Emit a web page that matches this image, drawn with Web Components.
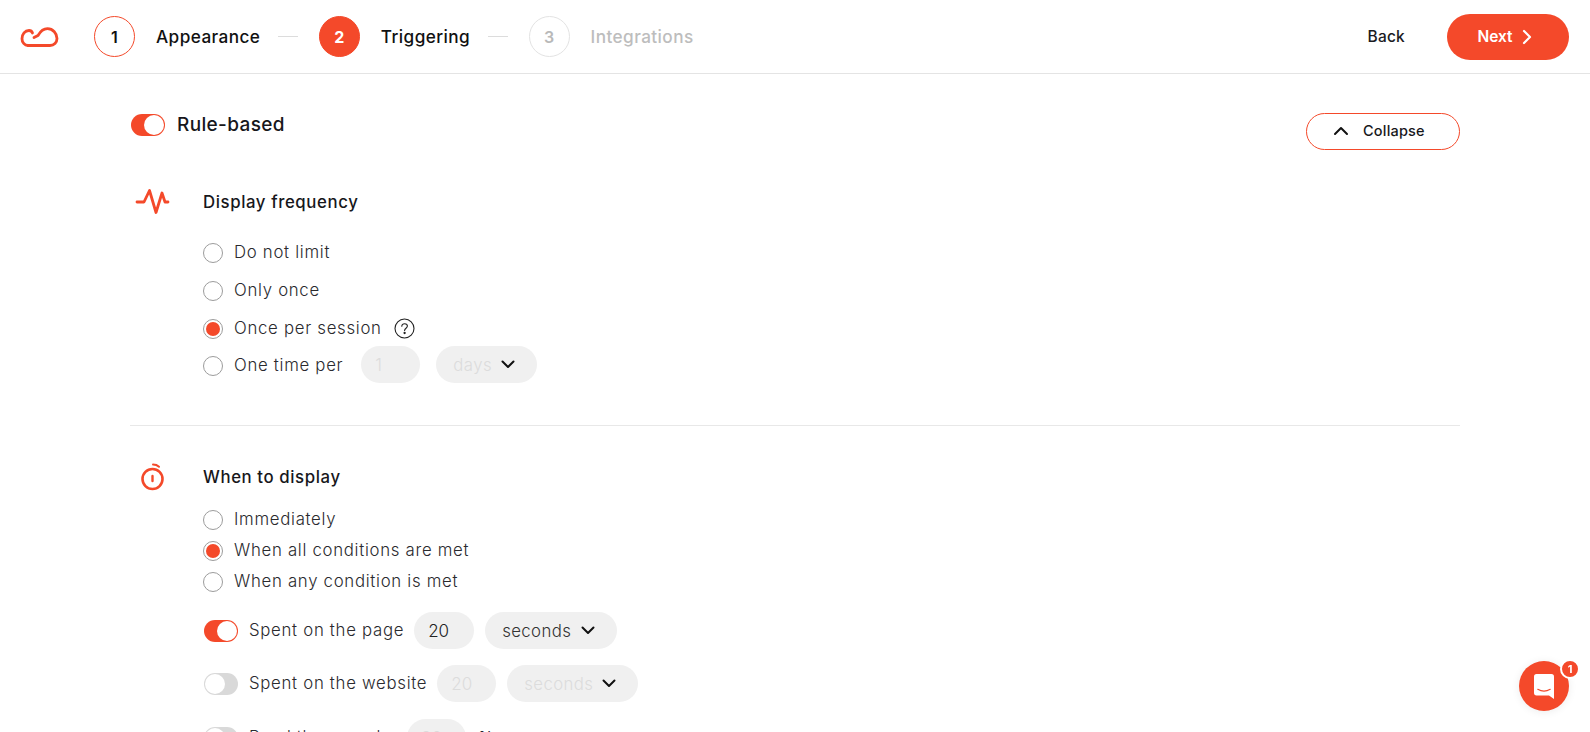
<!DOCTYPE html>
<html><head><meta charset="utf-8">
<style>
html,body{margin:0;padding:0;height:732px;overflow:hidden;background:#fff;font-family:Inter,"Open Sans",sans-serif;color:#1b1b1f}
</style></head><body>
<app-header></app-header>
<main-panel>
  <rule-head></rule-head>
  <rule-section kind="pulse" heading="Display frequency" gap="20">
    <div style="display:flex;flex-direction:column">
      <radio-row style="height:38px" label="Do not limit"></radio-row>
      <radio-row style="height:38px" label="Only once"></radio-row>
      <radio-row style="height:37px" label="Once per session" checked help></radio-row>
      <radio-row style="height:38px" label="One time per"><num-field off value="1" w="59"></num-field><unit-select off value="days" w="101"></unit-select></radio-row>
    </div>
  </rule-section>
  <hr-line></hr-line>
  <rule-section kind="timer" heading="When to display" gap="15">
    <div style="display:flex;flex-direction:column">
      <radio-row style="height:31px" label="Immediately"></radio-row>
      <radio-row style="height:31px" label="When all conditions are met" checked></radio-row>
      <radio-row style="height:31px" label="When any condition is met"></radio-row>
      <toggle-row style="margin-top:15px" on label="Spent on the page"><num-field value="20" w="60"></num-field><unit-select value="seconds" w="132"></unit-select></toggle-row>
      <toggle-row style="margin-top:16px" label="Spent on the website"><num-field off value="20" w="59"></num-field><unit-select off value="seconds" w="131"></unit-select></toggle-row>
      <toggle-row style="margin-top:17px" label="Read the page by"><num-field off value="20" w="59"></num-field><span style="font-size:15.5px;margin-left:1px">%</span></toggle-row>
    </div>
  </rule-section>
</main-panel>
<chat-bubble></chat-bubble>
<script>
const ACC='#f4492a';
function def(name,html){customElements.define(name,class extends HTMLElement{connectedCallback(){if(this.shadowRoot)return;const r=this.attachShadow({mode:'open'});r.innerHTML=typeof html==='function'?html(this):html;}})}
def('step-item',e=>{const s=e.getAttribute('state');
 const c=s==='active'?`background:${ACC};border-color:${ACC};color:#fff;font-weight:700`:s==='done'?`border-color:${ACC};color:#111;font-weight:600`:`border-color:#e3e3e3;color:#b9b9b9;font-weight:600`;
 const t=s==='off'?'#bdbdbd':'#111';
 return `<style>:host{display:flex;align-items:center}
 .c{width:41px;height:41px;border:1.6px solid;border-radius:50%;display:flex;align-items:center;justify-content:center;font-size:16px;box-sizing:border-box;flex:none;${c}}
 .t{margin-left:21px;font-size:17.2px;font-weight:500;color:${t};letter-spacing:.42px;white-space:nowrap}</style>
 <div class="c">${e.getAttribute('n')}</div><div class="t">${e.getAttribute('label')}</div>`});
def('app-header',`<style>:host{display:flex;align-items:center;height:73px;border-bottom:1px solid #e4e4e4;padding:0 21px 0 20px}
 .dash{width:20px;height:1px;background:#dcdcdc;margin:0 20.500px 0 18px;flex:none}
 .steps{display:flex;align-items:center;margin-left:35px;flex:1}
 .back{font-size:15.5px;font-weight:500;color:#1b1b1f;margin-right:42px;letter-spacing:.2px}
 .next{width:122px;height:46px;box-sizing:border-box;padding-right:7px;border-radius:23px;background:${ACC};color:#fff;font-size:15.5px;font-weight:600;display:flex;align-items:center;justify-content:center;gap:9px}
 svg{display:block}</style>
 <svg width="39" height="23" viewBox="0 0 39 23" fill="none" stroke="${ACC}" stroke-width="2.8" stroke-linecap="round" stroke-linejoin="round"><path d="M8 20.500h22c4 0 7-3.200 7-7 0-5-4-9.800-9.500-9.800-4 0-7 2.500-9.500 6.800l-4 2"/><path d="M8 20.500C4.500 20.500 2 17.300 2 13.700 2 9 5 5.500 9 5.500c2 0 3 1 3.500 2.500"/></svg>
 <div class="steps"><step-item state="done" n="1" label="Appearance"></step-item><div class="dash"></div><step-item state="active" n="2" label="Triggering"></step-item><div class="dash"></div><step-item state="off" n="3" label="Integrations"></step-item></div>
 <div class="back">Back</div>
 <div class="next"><span>Next</span><svg width="10" height="16" viewBox="0 0 10 16" fill="none" stroke="#fff" stroke-width="2.200" stroke-linecap="round" stroke-linejoin="round"><path d="M2 2l6 6-6 6"/></svg></div>`);
def('main-panel',`<style>:host{display:block;margin:0 130px;padding-top:39px}</style><slot></slot>`);
def('tog-switch',e=>{const on=e.hasAttribute('on');
 return `<style>:host{display:block;width:34px;height:22px;flex:none;position:relative;border-radius:11px;background:${on?ACC:'#d9d9d9'}}
 i{position:absolute;top:1px;${on?'right:1px':'left:1px'};width:20px;height:20px;border-radius:50%;background:#fff}</style><i></i>`});
def('rule-head',`<style>:host{display:flex;justify-content:space-between;align-items:flex-start;padding-left:1px;margin-bottom:40px}
 .l{display:flex;align-items:center;gap:12px;font-size:19px;font-weight:500;letter-spacing:.35px;color:#17171b;height:22px;margin-top:1px}
 .l span{margin-top:-2px}
 .b{width:154px;height:37px;box-sizing:border-box;border:1.6px solid ${ACC};border-radius:19px;display:flex;align-items:center;justify-content:flex-start;gap:14px;font-size:14.500px;font-weight:500;color:#17171b;letter-spacing:.2px;padding:0 0 2px 26px}
 svg{display:block}</style>
 <div class="l"><tog-switch on></tog-switch><span>Rule-based</span></div>
 <div class="b"><svg width="16" height="10" viewBox="0 0 16 10" fill="none" stroke="#111" stroke-width="2" stroke-linecap="round" stroke-linejoin="round"><path d="M2 8l6-6 6 6"/></svg><span>Collapse</span></div>`);
const ICONS={
 pulse:`<svg width="35" height="27" viewBox="0 0 35 27" fill="none" stroke="${ACC}" stroke-width="2.800" stroke-linecap="round" stroke-linejoin="round"><path d="M2 14h7l5.500-11.500 6.500 22 6-19.500 3 9h3"/></svg>`,
 timer:`<svg width="24" height="28" viewBox="0 0 24 28" fill="none" stroke="${ACC}" stroke-linecap="round"><circle cx="11.500" cy="16" r="10" stroke-width="2.600"/><path d="M11.500 13v5" stroke-width="2.400"/><path d="M12 1.500c2.500 0 4.500.8 6 2.200" stroke-width="2"/></svg>`};
def('rule-section',e=>`<style>:host{display:block;position:relative;padding-left:73px}
 .ico{position:absolute;left:${e.getAttribute('kind')==='pulse'?5:11}px;top:-2px}
 .h{font-size:16.800px;font-weight:500;height:24px;line-height:24px;letter-spacing:.6px;color:#17171b;margin-bottom:${e.getAttribute('gap')}px}
 svg{display:block}</style>
 <div class="ico">${ICONS[e.getAttribute('kind')]}</div><div class="h">${e.getAttribute('heading')}</div><slot></slot>`);
def('radio-row',e=>{const c=e.hasAttribute('checked');
 return `<style>:host{display:flex;align-items:center}
 .r{width:20px;height:20px;box-sizing:border-box;border:1px solid #9c9c9c;border-radius:50%;display:flex;align-items:center;justify-content:center;flex:none;margin-right:11px}
 .r i{width:14px;height:14px;border-radius:50%;background:${ACC}}
 .t{font-size:16.800px;font-weight:300;letter-spacing:.7px;color:#2a2a2e;white-space:nowrap;margin-top:-2px}
 .s{display:flex;gap:16px;margin:-3px 0 0 18px}
 .q{margin-left:12px;flex:none;display:block;margin-top:-1px}</style>
 <div class="r">${c?'<i></i>':''}</div><div class="t">${e.getAttribute('label')}</div>
 ${e.hasAttribute('help')?`<svg class="q" width="21" height="21" viewBox="0 0 21 21" fill="none" stroke="#222" stroke-width="1.100"><circle cx="10.500" cy="10.500" r="9.500"/><path d="M7.800 8.300c0-1.600 1.200-2.600 2.800-2.600s2.800 1 2.800 2.400c0 2.100-2.800 2.200-2.800 4.400" stroke-linecap="round"/><circle cx="10.600" cy="15" r=".6" fill="#222"/></svg>`:''}
 <div class="s"><slot></slot></div>`});
def('toggle-row',e=>`<style>:host{display:flex;align-items:center;height:37px;padding-left:1px}
 .t{font-size:16.800px;font-weight:300;letter-spacing:.7px;color:#2a2a2e;white-space:nowrap;margin:-2px 0 0 11px}
 .s{display:flex;gap:11px;margin-left:10px;align-items:center}</style>
 <tog-switch ${e.hasAttribute('on')?'on':''}></tog-switch><div class="t">${e.getAttribute('label')}</div><div class="s"><slot></slot></div>`);
def('num-field',e=>{const o=e.hasAttribute('off');
 return `<style>:host{display:flex;align-items:center;width:${e.getAttribute('w')}px;height:37px;border-radius:18.500px;background:#f0f0f0;box-sizing:border-box;padding-left:14px;font-size:17px;font-weight:300;color:${o?'#dcdcdc':'#222'}}</style>${e.getAttribute('value')}`});
def('unit-select',e=>{const o=e.hasAttribute('off');
 return `<style>:host{display:flex;align-items:center;justify-content:space-between;width:${e.getAttribute('w')}px;height:37px;border-radius:18.500px;background:#f0f0f0;box-sizing:border-box;padding:0 22px 0 17px;font-size:16.800px;font-weight:300;letter-spacing:.4px;color:${o?'#dcdcdc':'#333'}}
 svg{display:block}</style><span>${e.getAttribute('value')}</span><svg width="14" height="9" viewBox="0 0 14 9" fill="none" stroke="#111" stroke-width="2" stroke-linecap="round" stroke-linejoin="round"><path d="M1.500 1.500L7 7l5.500-5.500"/></svg>`});
def('hr-line',`<style>:host{display:block;height:1px;background:#e8e8e8;margin:40px 0 39px}</style>`);
def('chat-bubble',`<style>:host{position:fixed;left:1519px;top:661px;width:50px;height:50px;border-radius:50%;background:${ACC};display:flex;align-items:center;justify-content:center;box-shadow:0 1px 8px rgba(0,0,0,.08)}
 .b{position:absolute;left:42px;top:-1px;width:18px;height:18px;box-sizing:border-box;background:${ACC};outline:2px solid #fff;outline-offset:-1px;border-radius:50%;color:#fff;font:700 11px/18px Inter,sans-serif;text-align:center}</style>
 <svg width="20" height="25" viewBox="0 0 24 27" preserveAspectRatio="none"><path d="M3 0h18a3 3 0 0 1 3 3v24l-6-3.700H3a3 3 0 0 1-3-3V3a3 3 0 0 1 3-3z" fill="#fff"/><path d="M4.500 16.500c4.500 2.400 10.500 2.400 15 0" fill="none" stroke="${ACC}" stroke-width="1.300" stroke-linecap="round"/></svg><div class="b">1</div>`);
</script>
</body></html>
